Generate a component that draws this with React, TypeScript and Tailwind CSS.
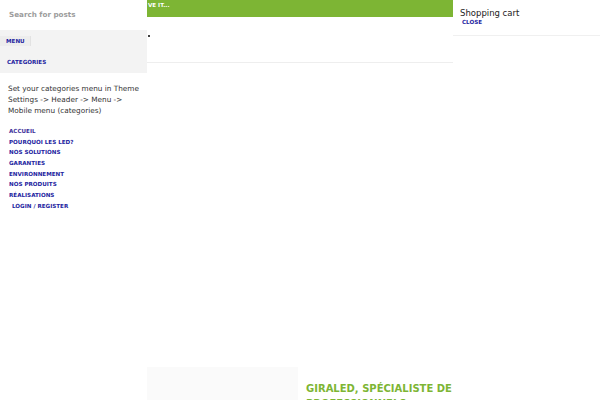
import React from "react";

const links = [
  "Accueil",
  "Pourquoi les LED?",
  "Nos solutions",
  "Garanties",
  "Environnement",
  "Nos produits",
  "Réalisations",
];

export default function App() {
  return (
    <div
      className="flex h-[400px] w-[600px] overflow-hidden bg-white"
      style={{ fontFamily: '"DejaVu Sans", sans-serif' }}
    >
      {/* Mobile menu panel */}
      <aside className="flex w-[147px] shrink-0 flex-col">
        <div className="flex h-[30px] items-center px-[9px]">
          <span className="text-[7.2px] font-bold text-[#9c9c9c]">Search for posts</span>
        </div>
        <div className="flex h-[43px] flex-col bg-[#f3f3f3]">
          <div className="mt-[6px] flex h-[10px] w-[31px] items-center border-r border-[#e2e2e2] bg-[#ededed] pl-[6px]">
            <span className="text-[5.6px] font-bold uppercase text-[#2323a0]">Menu</span>
          </div>
          <div className="mt-[12px] pl-[7px] text-[5.6px] font-bold uppercase leading-[8px] text-[#2323a0]">
            Categories
          </div>
        </div>
        <p className="mt-[10px] pl-[8px] pr-[2px] text-[7.3px] leading-[11px] text-[#333]">
          Set your categories menu in Theme Settings -&gt; Header -&gt; Menu -&gt; Mobile menu
          (categories)
        </p>
        <ul className="mt-[10px] flex flex-col px-[9px]">
          {links.map((l, i) => (
            <li
              key={l}
              className={`h-[10.7px] text-[5.6px] font-bold uppercase leading-[10.7px] ${
                i === 0 ? "text-[#40309a]" : "text-[#2323a0]"
              }`}
            >
              {l}
            </li>
          ))}
          <li className="h-[10.7px] pl-[3px] text-[5.6px] font-bold uppercase leading-[10.7px] text-[#2323a0]">
            Login / Register
          </li>
        </ul>
      </aside>

      {/* Page content */}
      <main className="flex w-[306px] shrink-0 flex-col">
        <div className="h-[17px] bg-[#7db534] pl-[1px] pt-[2px]">
          <span className="block text-[5.6px] font-bold uppercase leading-[7px] text-white">ve it...</span>
        </div>
        <ul className="h-[46px] list-disc border-b border-[#eeeeee] pl-[12px] pt-[14px] text-[7.5px] leading-[10px]">
          <li className="marker:text-black"></li>
        </ul>
        <div className="flex-1" />
        <div className="flex h-[33px] gap-[8px]">
          <div className="w-[151px] shrink-0 bg-[#fafafa]" />
          <h2 className="pt-[14px] text-[10px] font-bold uppercase leading-[15px] text-[#7db534]">
            Giraled, spécialiste de professionnels
          </h2>
        </div>
      </main>

      {/* Cart panel */}
      <aside className="flex w-[147px] shrink-0 flex-col">
        <div className="h-[36px] border-b border-[#f0f0f0] pl-[7px] pt-[8px]">
          <div className="text-[8.5px] leading-[11px] text-[#222]">Shopping cart</div>
          <div className="pl-[2px] text-[5.6px] font-bold uppercase leading-[7px] text-[#2323a0]">Close</div>
        </div>
      </aside>
    </div>
  );
}
